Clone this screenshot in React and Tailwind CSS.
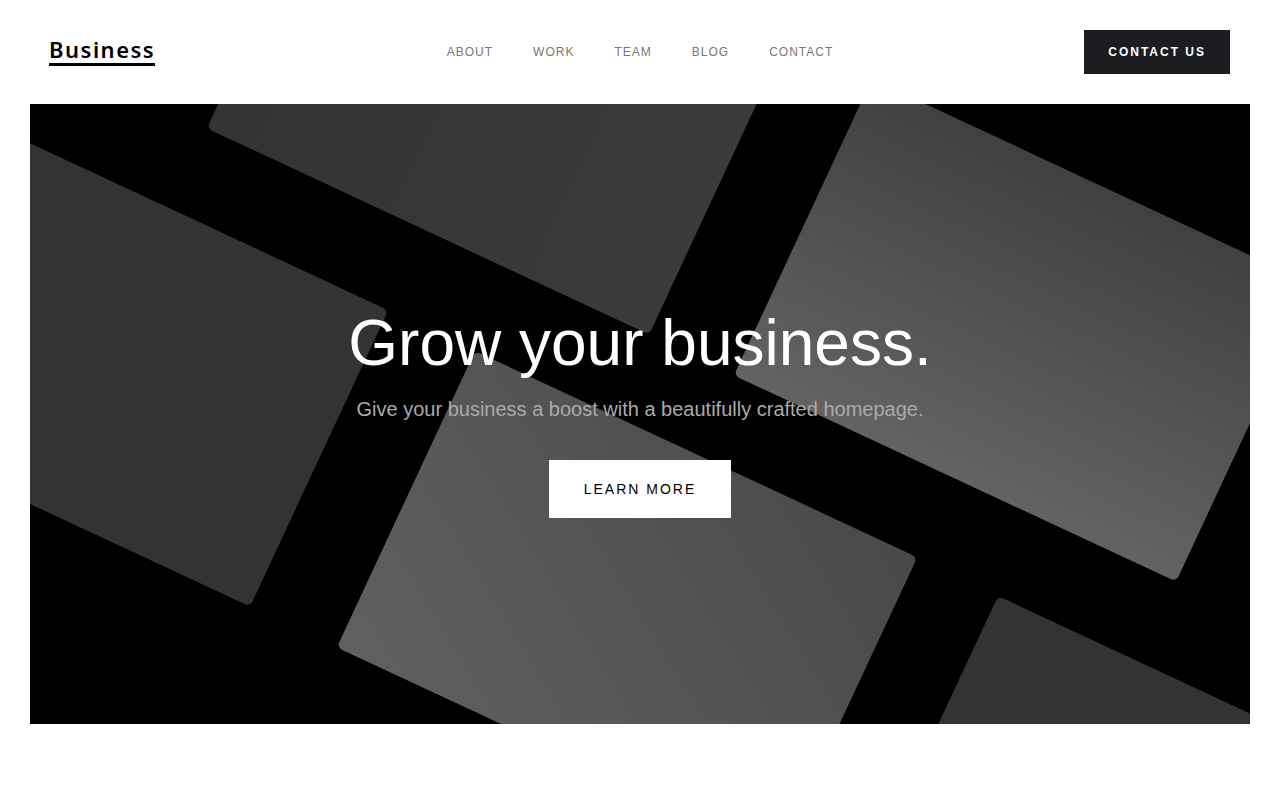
import React from 'react';

const navLinks = ['About', 'Work', 'Team', 'Blog', 'Contact'];

// Rounded cards scattered behind the hero copy, in hero-local coordinates.
// Each one is rotated 25deg around its own top-left corner.
const tiles = [
  { id: 'a', x: 315, y: -272, fill: 'url(#tileA)' },
  { id: 'b', x: -84, y: 0, fill: '#333333' },
  { id: 'c', x: 842, y: -25, fill: 'url(#tileC)' },
  { id: 'd', x: 445, y: 247, fill: 'url(#tileD)' },
  { id: 'e', x: 968, y: 492, fill: '#333333' },
];

function HeroBackdrop() {
  return (
    <svg
      className="absolute inset-0 h-full w-full"
      viewBox="0 0 1220 620"
      preserveAspectRatio="none"
      aria-hidden="true"
    >
      <defs>
        <linearGradient id="tileA" x1="0" y1="0" x2="1" y2="0">
          <stop offset="0" stopColor="#333333" />
          <stop offset="1" stopColor="#3b3b3b" />
        </linearGradient>
        <linearGradient id="tileC" x1="0" y1="0" x2="0" y2="1">
          <stop offset="0" stopColor="#404040" />
          <stop offset="1" stopColor="#636363" />
        </linearGradient>
        <linearGradient id="tileD" x1="1" y1="0" x2="0" y2="1">
          <stop offset="0" stopColor="#494949" />
          <stop offset="1" stopColor="#606060" />
        </linearGradient>
      </defs>
      <rect width="1220" height="620" fill="#000000" />
      {tiles.map((t) => (
        <rect
          key={t.id}
          x={t.x}
          y={t.y}
          width="488"
          height="327"
          rx="6"
          fill={t.fill}
          transform={`rotate(25 ${t.x} ${t.y})`}
        />
      ))}
    </svg>
  );
}

export default function App() {
  return (
    <div className="min-h-[800px] bg-white font-['Liberation_Sans',Arial,sans-serif]">
      {/* Top bar */}
      <header className="grid h-[104px] grid-cols-[1fr_auto_1fr] items-center px-12">
        <div className="flex items-center">
          <a
            href="#"
            className="ml-[1px] inline-block border-b-[3px] border-black pb-[3px] font-['Noto_Sans',sans-serif] text-[22px] font-semibold leading-[22px] tracking-[1.5px] text-black"
          >
            Business
          </a>
        </div>
        <nav className="flex items-center gap-10">
          {navLinks.map((link) => (
            <a
              key={link}
              href="#"
              className="text-xs uppercase tracking-[1px] text-[#777777]"
            >
              {link}
            </a>
          ))}
        </nav>
        <div className="flex justify-end">
          <button className="mr-[2px] h-[44px] bg-[#1c1d21] px-6 text-xs font-bold uppercase tracking-[2px] text-white">
            Contact us
          </button>
        </div>
      </header>

      {/* Hero */}
      <section className="relative mx-[30px] h-[620px] overflow-hidden bg-black">
        <HeroBackdrop />
        <div className="relative flex h-full flex-col items-center justify-center text-center">
          <h1 className="text-[64px] font-normal leading-none text-white">
            Grow your business.
          </h1>
          <p className="mt-[20px] text-xl leading-7 text-[#aaaaaa]">
            Give your business a boost with a beautifully crafted homepage.
          </p>
          <button className="mt-[37px] h-[58px] bg-white px-[35px] text-sm uppercase tracking-[2px] text-black">
            Learn more
          </button>
        </div>
      </section>
    </div>
  );
}
